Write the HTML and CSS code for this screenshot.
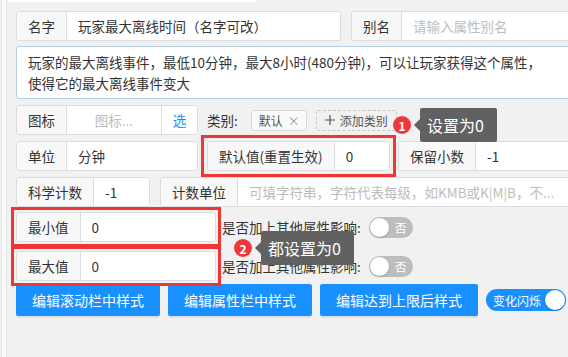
FILE: index.html
```html
<!DOCTYPE html>
<html>
  <head>
    <meta charset="utf-8">
    <title>属性编辑</title>
    <link rel="stylesheet" href="styles.css">
  </head>
  <body>
    <div class="page">
      <div class="side"></div>
      <div class="main">
        <div class="prev"></div>

        <div class="row row-first">
          <div class="group g-name">
            <span class="label">名字</span>
            <input class="field" value="玩家最大离线时间（名字可改）">
          </div>
          <div class="group g-fill">
            <span class="label">别名</span>
            <input class="field" placeholder="请输入属性别名">
          </div>
        </div>

        <div class="desc">玩家的最大离线事件，最低10分钟，最大8小时(480分钟)，可以让玩家获得这个属性，<br>使得它的最大离线事件变大</div>

        <div class="row">
          <div class="group g-left">
            <span class="label">图标</span>
            <input class="field center" placeholder="图标...">
            <span class="pick">选</span>
          </div>
          <span class="cat-label">类别:</span>
          <span class="tag">默认<i>×</i></span>
          <span class="add-tag">
            <svg width="10" height="10" viewBox="0 0 10 10"><path d="M5 0v10M0 5h10" stroke="#555" stroke-width="1.2"/></svg>
            添加类别
          </span>
        </div>

        <div class="row">
          <div class="group g-left">
            <span class="label">单位</span>
            <input class="field" value="分钟">
          </div>
          <div class="group g-default marked">
            <span class="label">默认值(重置生效)</span>
            <input class="field" value="0">
          </div>
          <div class="group g-fill g-keep">
            <span class="label">保留小数</span>
            <input class="field" value="-1">
          </div>
        </div>

        <div class="row">
          <div class="group g-sci">
            <span class="label">科学计数</span>
            <input class="field" value="-1">
          </div>
          <div class="group g-fill g-unit">
            <span class="label">计数单位</span>
            <input class="field" placeholder="可填字符串，字符代表每级，如KMB或K|M|B，不...">
          </div>
        </div>

        <div class="row row-min">
          <div class="group g-range marked-sm">
            <span class="label">最小值</span>
            <input class="field" value="0">
          </div>
          <span class="hint">是否加上其他属性影响:</span>
          <span class="switch"><span class="knob"></span><span class="switch-text">否</span></span>
        </div>

        <div class="row row-max">
          <div class="group g-range marked-sm">
            <span class="label">最大值</span>
            <input class="field" value="0">
          </div>
          <span class="hint">是否加上其他属性影响:</span>
          <span class="switch"><span class="knob"></span><span class="switch-text">否</span></span>
        </div>

        <div class="row row-actions">
          <button class="btn">编辑滚动栏中样式</button>
          <button class="btn">编辑属性栏中样式</button>
          <button class="btn">编辑达到上限后样式</button>
          <span class="switch switch-on"><span class="switch-text">变化闪烁</span><span class="knob"></span></span>
        </div>
      </div>

      <!-- annotations drawn over the form -->
      <div class="note note-1">
        <span class="badge">1</span>
        <span class="tip">设置为0</span>
      </div>
      <div class="note note-2">
        <span class="badge">2</span>
        <span class="tip">都设置为0</span>
      </div>
    </div>
  </body>
</html>
```

FILE: styles.css
```css
body {
  margin: 0;
  background: #f1f1f1;
  font-family: "Noto Sans CJK SC", "Noto Sans", sans-serif;
  font-size: 13.5px;
  color: #333;
  overflow: hidden;
}

.page {
  position: relative;
  display: flex;
  height: 357px;
}

.side {
  flex: none;
  width: 4px;
  margin-left: 1px;
  background: #fafafa;
  border-left: 1px solid #e3e3e3;
  border-right: 1px solid #e3e3e3;
}

.main {
  flex: none;
  width: 590px;
  padding-left: 9px;
}

.prev {
  width: 250px;
  height: 2px;
  margin-left: -9px;
  background: #fff;
}

.row {
  display: flex;
  align-items: center;
  height: 30px;
  margin-top: 6px;
}
.row-first {
  margin-top: 9px;
}
.row-min {
  margin-top: 5px;
}
.row-max {
  margin-top: 9px;
}
.row-actions {
  height: 32px;
  margin-top: 3px;
  gap: 8px;
}

.desc {
  margin-top: 5px;
  height: 53px;
  box-sizing: border-box;
  padding: 5px 11px 0;
  background: #fff;
  border: 1px solid #b9cde0;
  border-radius: 3px;
  line-height: 21px;
  white-space: nowrap;
  overflow: hidden;
}

/* input groups */
.group {
  display: flex;
  height: 30px;
  box-sizing: border-box;
  border: 1px solid #dcdcdc;
  border-radius: 3px;
  background: #fff;
}
.label {
  flex: none;
  display: flex;
  align-items: center;
  padding: 0 11px;
  background: #f8f8f8;
  border-right: 1px solid #dcdcdc;
  border-radius: 2px 0 0 2px;
  white-space: nowrap;
}
.field {
  flex: 1;
  min-width: 0;
  padding: 0 11px;
  border: 0;
  outline: none;
  background: transparent;
  font: inherit;
  color: #333;
}
.field::placeholder {
  color: #bdbdbd;
}
.field.center {
  text-align: center;
}
.pick {
  flex: none;
  width: 35px;
  display: flex;
  align-items: center;
  justify-content: center;
  border-left: 1px solid #dcdcdc;
  color: #1890ff;
}

.g-name {
  width: 325px;
}
.g-fill {
  flex: 1;
  margin-left: 10px;
}
.g-left {
  width: 182px;
}
.g-default {
  width: 183px;
  margin-left: 9px;
}
.g-keep {
  margin-left: 8px;
}
.g-sci {
  width: 134px;
}
.g-range {
  width: 200px;
}

/* red marks around edited fields */
.marked,
.marked-sm {
  position: relative;
}
.marked::after,
.marked-sm::after {
  content: "";
  position: absolute;
  inset: -7px;
  border: 3px solid #ef3636;
  pointer-events: none;
}
.marked-sm::after {
  inset: -6px;
}

/* category tags */
.cat-label {
  margin-left: 9px;
}
.tag {
  display: flex;
  align-items: center;
  height: 21px;
  box-sizing: border-box;
  margin-left: 13px;
  padding: 0 6px 0 7px;
  background: #fafafa;
  border: 1px solid #d9d9d9;
  border-radius: 3px;
  font-size: 12px;
  color: #555;
}
.tag i {
  font-style: normal;
  color: #999;
  margin-left: 5px;
}
.add-tag {
  display: flex;
  align-items: center;
  gap: 5px;
  height: 21px;
  box-sizing: border-box;
  margin-left: 9px;
  padding: 0 8px;
  border: 1px dashed #c8c8c8;
  border-radius: 2px;
  font-size: 12px;
  color: #555;
}

.hint {
  margin-left: 6px;
  white-space: nowrap;
}

/* switches */
.switch {
  flex: none;
  display: flex;
  align-items: center;
  width: 44px;
  height: 21px;
  margin-left: 8px;
  box-sizing: border-box;
  padding: 0 1px;
  border-radius: 11px;
  background: #bdbdbd;
}
.knob {
  width: 19px;
  height: 19px;
  border-radius: 50%;
  background: #fff;
  box-shadow: 0 1px 2px rgba(0, 0, 0, 0.2);
}
.switch-text {
  margin-left: 6px;
  font-size: 12px;
  color: #fff;
}
.switch-on {
  width: 80px;
  height: 22px;
  margin-left: 0;
  padding: 0 1px 0 7px;
  justify-content: space-between;
  background: #1890ff;
}
.switch-on .switch-text {
  margin-left: 0;
}
.switch-on .knob {
  width: 20px;
  height: 20px;
}

.btn {
  height: 32px;
  padding: 0 16px;
  border: 0;
  border-radius: 2px;
  background: #1890ff;
  color: #fff;
  font: inherit;
  font-size: 14px;
  box-shadow: 0 2px 0 rgba(0, 0, 0, 0.07);
}

/* annotation badges and tooltips */
.note {
  position: absolute;
  display: flex;
  align-items: center;
  z-index: 2;
}
.note-1 {
  left: 393px;
  top: 108px;
}
.note-2 {
  left: 234px;
  top: 231px;
}
.badge {
  width: 18px;
  height: 18px;
  border-radius: 50%;
  background: #f0373b;
  color: #fff;
  font-size: 12px;
  font-weight: bold;
  display: flex;
  align-items: center;
  justify-content: center;
}
.tip {
  position: relative;
  display: flex;
  align-items: center;
  height: 34px;
  margin-left: 9px;
  padding: 0 13px 0 7px;
  background: #616161;
  border-radius: 2px;
  color: #fff;
  font-size: 16px;
  white-space: nowrap;
}
.tip::before {
  content: "";
  position: absolute;
  left: -6px;
  top: 50%;
  margin-top: -6px;
  border: 6px solid transparent;
  border-left: 0;
  border-right-color: #616161;
}
```
